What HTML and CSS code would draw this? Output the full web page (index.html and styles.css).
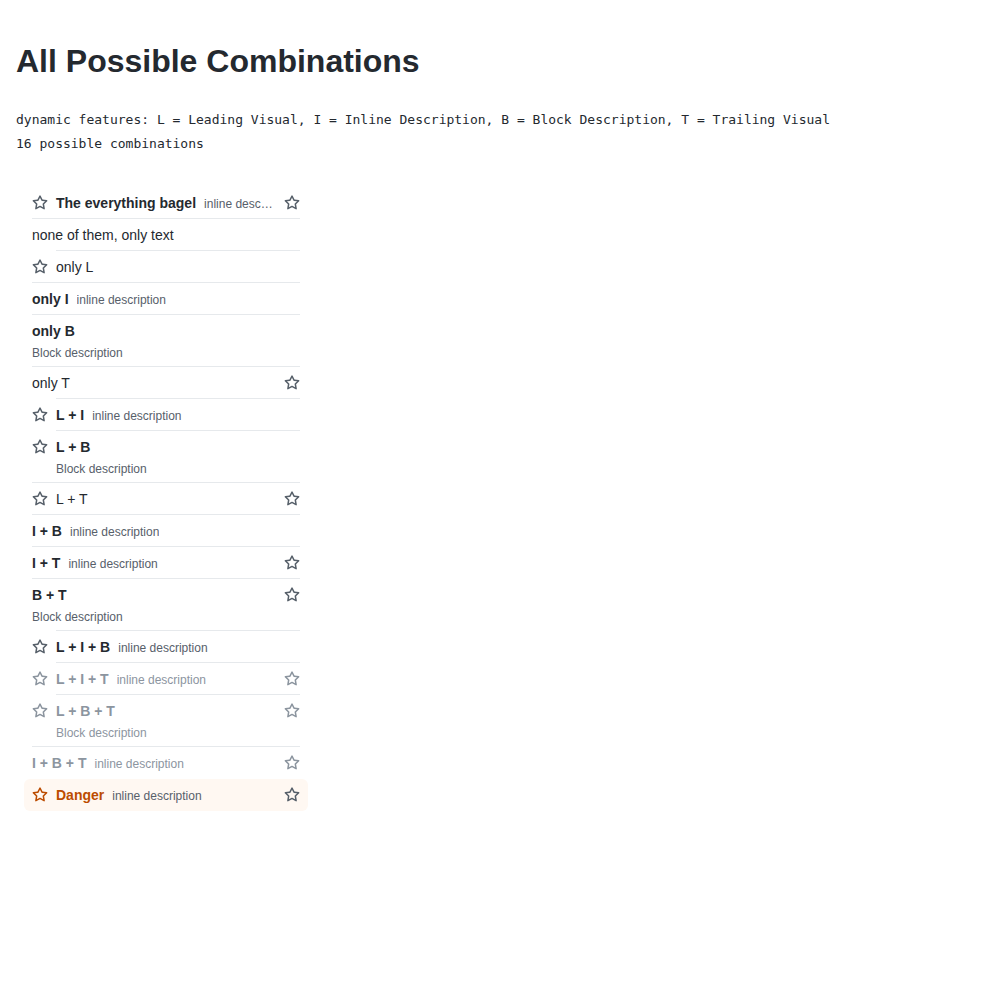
FILE: index.html
```html
<!DOCTYPE html>
<html>
<head>
<meta charset="utf-8">
<link rel="stylesheet" href="styles.css">
</head>
<body>
<svg width="0" height="0" class="defs">
  <defs>
    <symbol id="star" viewBox="0 0 16 16">
      <path fill="currentColor" d="M8 .25a.75.75 0 0 1 .673.418l1.882 3.815 4.21.612a.75.75 0 0 1 .416 1.279l-3.046 2.97.719 4.192a.751.751 0 0 1-1.088.791L8 12.347l-3.766 1.98a.75.75 0 0 1-1.088-.79l.72-4.194L.818 6.374a.75.75 0 0 1 .416-1.28l4.21-.611L7.327.668A.75.75 0 0 1 8 .25Zm0 2.445L6.615 5.5a.75.75 0 0 1-.564.41l-3.097.45 2.24 2.184a.75.75 0 0 1 .216.664l-.528 3.084 2.769-1.456a.75.75 0 0 1 .698 0l2.77 1.456-.53-3.084a.75.75 0 0 1 .216-.664l2.24-2.183-3.096-.45a.75.75 0 0 1-.564-.41L8 2.694Z"/>
    </symbol>
  </defs>
</svg>
<main class="page">
  <h1 class="title">All Possible Combinations</h1>
  <p class="mono">dynamic features: L = Leading Visual, I = Inline Description, B = Block Description, T = Trailing Visual<br>16 possible combinations</p>

  <ul class="list">
    <li class="item">
      <svg class="icon lead"><use href="#star"/></svg>
      <div class="main"><div class="line"><span class="label bold">The everything bagel</span><span class="desc">inline description</span></div></div>
      <svg class="icon trail"><use href="#star"/></svg>
    </li>
    <li class="item div-l">
      <div class="main"><div class="line"><span class="label">none of them, only text</span></div></div>
    </li>
    <li class="item div-c">
      <svg class="icon lead"><use href="#star"/></svg>
      <div class="main"><div class="line"><span class="label">only L</span></div></div>
    </li>
    <li class="item div-l">
      <div class="main"><div class="line"><span class="label bold">only I</span><span class="desc">inline description</span></div></div>
    </li>
    <li class="item div-l">
      <div class="main"><div class="line"><span class="label bold">only B</span></div><div class="block">Block description</div></div>
    </li>
    <li class="item div-l">
      <div class="main"><div class="line"><span class="label">only T</span></div></div>
      <svg class="icon trail"><use href="#star"/></svg>
    </li>
    <li class="item div-c">
      <svg class="icon lead"><use href="#star"/></svg>
      <div class="main"><div class="line"><span class="label bold">L + I</span><span class="desc">inline description</span></div></div>
    </li>
    <li class="item div-c">
      <svg class="icon lead"><use href="#star"/></svg>
      <div class="main"><div class="line"><span class="label bold">L + B</span></div><div class="block">Block description</div></div>
    </li>
    <li class="item div-l">
      <svg class="icon lead"><use href="#star"/></svg>
      <div class="main"><div class="line"><span class="label">L + T</span></div></div>
      <svg class="icon trail"><use href="#star"/></svg>
    </li>
    <li class="item div-l">
      <div class="main"><div class="line"><span class="label bold">I + B</span><span class="desc">inline description</span></div></div>
    </li>
    <li class="item div-l">
      <div class="main"><div class="line"><span class="label bold">I + T</span><span class="desc">inline description</span></div></div>
      <svg class="icon trail"><use href="#star"/></svg>
    </li>
    <li class="item div-l">
      <div class="main"><div class="line"><span class="label bold">B + T</span></div><div class="block">Block description</div></div>
      <svg class="icon trail"><use href="#star"/></svg>
    </li>
    <li class="item div-c">
      <svg class="icon lead"><use href="#star"/></svg>
      <div class="main"><div class="line"><span class="label bold">L + I + B</span><span class="desc">inline description</span></div></div>
    </li>
    <li class="item div-c disabled">
      <svg class="icon lead"><use href="#star"/></svg>
      <div class="main"><div class="line"><span class="label bold">L + I + T</span><span class="desc">inline description</span></div></div>
      <svg class="icon trail"><use href="#star"/></svg>
    </li>
    <li class="item div-c disabled">
      <svg class="icon lead"><use href="#star"/></svg>
      <div class="main"><div class="line"><span class="label bold">L + B + T</span></div><div class="block">Block description</div></div>
      <svg class="icon trail"><use href="#star"/></svg>
    </li>
    <li class="item div-l disabled">
      <div class="main"><div class="line"><span class="label bold">I + B + T</span><span class="desc">inline description</span></div></div>
      <svg class="icon trail"><use href="#star"/></svg>
    </li>
    <li class="item danger">
      <svg class="icon lead"><use href="#star"/></svg>
      <div class="main"><div class="line"><span class="label bold">Danger</span><span class="desc">inline description</span></div></div>
      <svg class="icon trail"><use href="#star"/></svg>
    </li>
  </ul>
</main>
</body>
</html>
```

FILE: styles.css
```css
html, body {
  margin: 0;
  padding: 0;
  background: #ffffff;
}

body {
  font-family: "Liberation Sans", Arial, sans-serif;
  color: #24292f;
}

.defs {
  position: absolute;
  width: 0;
  height: 0;
  overflow: hidden;
}

.page {
  padding: 0 16px 16px;
}

.title {
  margin: 41px 0 0;
  font-size: 32px;
  line-height: 40px;
  font-weight: 700;
  color: #24292f;
}

.mono {
  margin: 27px 0 0;
  font-family: "DejaVu Sans Mono", monospace;
  font-size: 13px;
  line-height: 24px;
  color: #24292f;
}

.list {
  list-style: none;
  margin: 23px 0 0;
  padding: 8px 0;
  width: 300px;
}

.item {
  position: relative;
  display: flex;
  align-items: flex-start;
  gap: 8px;
  margin: 0 8px;
  padding: 6px 8px;
  border-radius: 6px;
  font-size: 14px;
  line-height: 20px;
}

.item.div-l::before,
.item.div-c::before {
  content: "";
  position: absolute;
  top: -1px;
  right: 8px;
  height: 1px;
  background: #e6e9ec;
}

.item.div-l::before { left: 8px; }
.item.div-c::before { left: 32px; }

.icon {
  flex: none;
  width: 16px;
  height: 16px;
  margin-top: 2px;
  color: #57606a;
}

.main {
  flex: 1;
  min-width: 0;
  display: flex;
  flex-direction: column;
}

.line {
  display: flex;
  align-items: baseline;
  gap: 8px;
  min-width: 0;
}

.label {
  flex: none;
  white-space: nowrap;
  color: #24292f;
}

.label.bold {
  font-weight: 700;
}

.desc {
  flex: 0 1 auto;
  min-width: 0;
  overflow: hidden;
  text-overflow: ellipsis;
  white-space: nowrap;
  font-size: 12px;
  line-height: 16px;
  color: #57606a;
}

.block {
  padding-top: 4px;
  font-size: 12px;
  line-height: 16px;
  color: #57606a;
}

.disabled .label,
.disabled .desc,
.disabled .block,
.disabled .icon {
  color: #8c959f;
}

.danger {
  background: #fff8f2;
}

.danger .label,
.danger .lead {
  color: #bc4c00;
}

.danger .trail {
  color: #57606a;
}
```
